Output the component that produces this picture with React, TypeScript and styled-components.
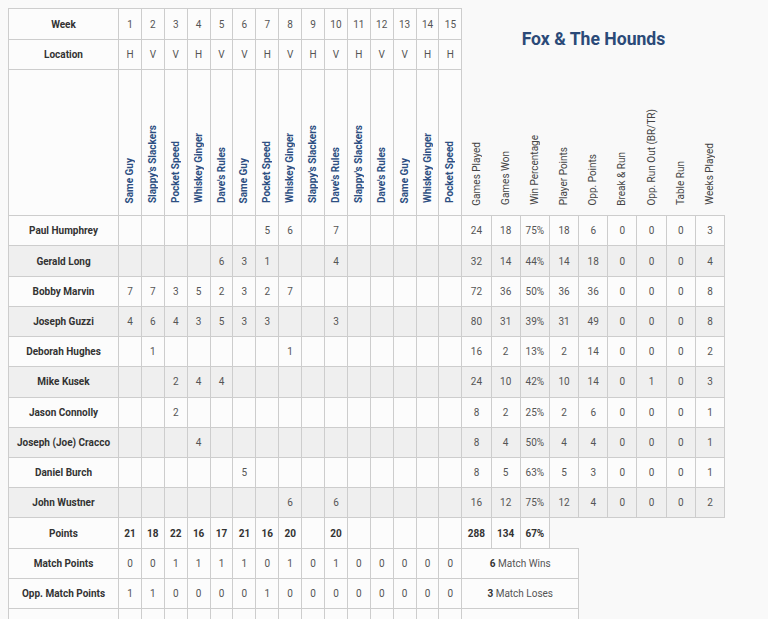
import React from "react";
import styled, { createGlobalStyle } from "styled-components";

const GlobalStyle = createGlobalStyle`
  body {
    margin: 8px;
    background: #f9f9f9;
    font-family: Roboto, "Liberation Sans", sans-serif;
  }
`;

const Table = styled.table`
  border-collapse: collapse;
  table-layout: fixed;
  width: 717px;
  font-size: 10px;
  color: #555;
`;

const Col = styled.col<{ $w: number }>`
  width: ${(p) => p.$w}px;
`;

const Row = styled.tr<{ $alt?: boolean; $tall?: boolean }>`
  background: ${(p) => (p.$alt ? "#efefef" : "#fcfcfc")};
  & > td {
    height: ${(p) => (p.$tall ? 30 : 29.23)}px;
  }
`;

const Cell = styled.td<{ $bold?: boolean }>`
  border: 1px solid #cdcdcd;
  padding: 0;
  text-align: center;
  vertical-align: middle;
  font-weight: ${(p) => (p.$bold ? 700 : 400)};
  color: ${(p) => (p.$bold ? "#333" : "#555")};
  white-space: nowrap;
`;

const Label = styled(Cell)`
  font-weight: 700;
  color: #333;
`;

const TitleCell = styled.td`
  border: none;
  background: #f9f9f9;
  text-align: center;
  vertical-align: middle;
  font-size: 17.6px;
  font-weight: 700;
  color: #2b4a78;
`;

const HeadRow = styled.tr`
  background: #fcfcfc;
  & > td {
    height: 135px;
  }
`;

const OpponentCell = styled.td`
  border: 1px solid #cdcdcd;
  padding: 0 0 10px;
  text-align: center;
  vertical-align: bottom;
  color: #2d4f82;
  font-weight: 700;
`;

const StatHead = styled.td`
  border: none;
  border-bottom: 1px solid #cdcdcd;
  background: #f9f9f9;
  padding: 0 0 8px;
  text-align: center;
  vertical-align: bottom;
  color: #444;
  font-weight: 400;
`;

const Vertical = styled.span`
  display: inline-block;
  writing-mode: vertical-rl;
  transform: rotate(180deg);
  white-space: nowrap;
  line-height: 1;
`;

const BlankLabel = styled(Cell)`
  background: #fcfcfc;
`;

const Strong = styled.b`
  color: #333;
`;

const weeks = Array.from({ length: 15 }, (_, i) => i + 1);
const locations = "HVVHVVHVHVHVVHH".split("");
const opponents = [
  "Same Guy",
  "Slappy's Slackers",
  "Pocket Speed",
  "Whiskey Ginger",
  "Dave's Rules",
  "Same Guy",
  "Pocket Speed",
  "Whiskey Ginger",
  "Slappy's Slackers",
  "Dave's Rules",
  "Slappy's Slackers",
  "Dave's Rules",
  "Same Guy",
  "Whiskey Ginger",
  "Pocket Speed",
];
const statNames = [
  "Games Played",
  "Games Won",
  "Win Percentage",
  "Player Points",
  "Opp. Points",
  "Break & Run",
  "Opp. Run Out (BR/TR)",
  "Table Run",
  "Weeks Played",
];

type Player = { name: string; scores: Record<number, number>; stats: string[] };

const players: Player[] = [
  { name: "Paul Humphrey", scores: { 7: 5, 8: 6, 10: 7 }, stats: ["24", "18", "75%", "18", "6", "0", "0", "0", "3"] },
  { name: "Gerald Long", scores: { 5: 6, 6: 3, 7: 1, 10: 4 }, stats: ["32", "14", "44%", "14", "18", "0", "0", "0", "4"] },
  { name: "Bobby Marvin", scores: { 1: 7, 2: 7, 3: 3, 4: 5, 5: 2, 6: 3, 7: 2, 8: 7 }, stats: ["72", "36", "50%", "36", "36", "0", "0", "0", "8"] },
  { name: "Joseph Guzzi", scores: { 1: 4, 2: 6, 3: 4, 4: 3, 5: 5, 6: 3, 7: 3, 10: 3 }, stats: ["80", "31", "39%", "31", "49", "0", "0", "0", "8"] },
  { name: "Deborah Hughes", scores: { 2: 1, 8: 1 }, stats: ["16", "2", "13%", "2", "14", "0", "0", "0", "2"] },
  { name: "Mike Kusek", scores: { 3: 2, 4: 4, 5: 4 }, stats: ["24", "10", "42%", "10", "14", "0", "1", "0", "3"] },
  { name: "Jason Connolly", scores: { 3: 2 }, stats: ["8", "2", "25%", "2", "6", "0", "0", "0", "1"] },
  { name: "Joseph (Joe) Cracco", scores: { 4: 4 }, stats: ["8", "4", "50%", "4", "4", "0", "0", "0", "1"] },
  { name: "Daniel Burch", scores: { 6: 5 }, stats: ["8", "5", "63%", "5", "3", "0", "0", "0", "1"] },
  { name: "John Wustner", scores: { 8: 6, 10: 6 }, stats: ["16", "12", "75%", "12", "4", "0", "0", "0", "2"] },
];

const points = [21, 18, 22, 16, 17, 21, 16, 20, null, 20, null, null, null, null, null];
const matchPoints = [0, 0, 1, 1, 1, 1, 0, 1, 0, 1, 0, 0, 0, 0, 0];
const oppMatchPoints = [1, 1, 0, 0, 0, 0, 1, 0, 0, 0, 0, 0, 0, 0, 0];

const App = () => {
  return (
    <>
      <GlobalStyle />
      <Table>
        <colgroup>
          <Col $w={110} />
          {weeks.map((w) => (
            <Col key={w} $w={22.9} />
          ))}
          {statNames.map((s) => (
            <Col key={s} $w={29.2} />
          ))}
        </colgroup>
        <tbody>
          <Row $tall>
            <Label>Week</Label>
            {weeks.map((w) => (
              <Cell key={w}>{w}</Cell>
            ))}
            <TitleCell rowSpan={2} colSpan={9}>
              Fox &amp; The Hounds
            </TitleCell>
          </Row>
          <Row>
            <Label>Location</Label>
            {locations.map((l, i) => (
              <Cell key={i}>{l}</Cell>
            ))}
          </Row>
          <HeadRow>
            <BlankLabel />
            {opponents.map((o, i) => (
              <OpponentCell key={i}>
                <Vertical>{o}</Vertical>
              </OpponentCell>
            ))}
            {statNames.map((s) => (
              <StatHead key={s}>
                <Vertical>{s}</Vertical>
              </StatHead>
            ))}
          </HeadRow>
          {players.map((p, i) => (
            <Row key={p.name} $alt={i % 2 === 1}>
              <Label>{p.name}</Label>
              {weeks.map((w) => (
                <Cell key={w}>{p.scores[w] ?? ""}</Cell>
              ))}
              {p.stats.map((s, j) => (
                <Cell key={j}>{s}</Cell>
              ))}
            </Row>
          ))}
          <Row>
            <Label>Points</Label>
            {points.map((v, i) => (
              <Cell key={i} $bold>
                {v ?? ""}
              </Cell>
            ))}
            <Cell $bold>288</Cell>
            <Cell $bold>134</Cell>
            <Cell $bold>67%</Cell>
          </Row>
          <Row>
            <Label>Match Points</Label>
            {matchPoints.map((v, i) => (
              <Cell key={i}>{v}</Cell>
            ))}
            <Cell colSpan={4}>
              <Strong>6</Strong> Match Wins
            </Cell>
          </Row>
          <Row>
            <Label>Opp. Match Points</Label>
            {oppMatchPoints.map((v, i) => (
              <Cell key={i}>{v}</Cell>
            ))}
            <Cell colSpan={4}>
              <Strong>3</Strong> Match Loses
            </Cell>
          </Row>
          <Row>
            <Label>Rank</Label>
            {weeks.map((w) => (
              <Cell key={w} />
            ))}
            <Cell colSpan={4}>
              <Strong>2</Strong> Place
            </Cell>
          </Row>
        </tbody>
      </Table>
    </>
  );
};

export default App;
